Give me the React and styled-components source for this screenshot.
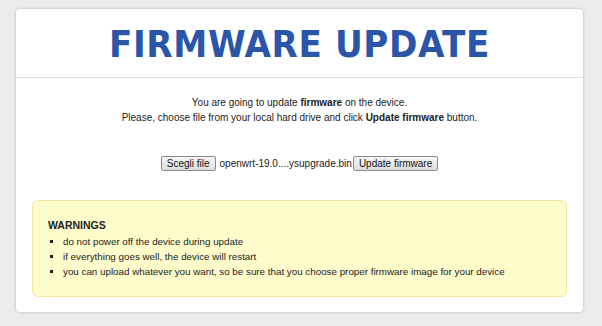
import React from "react";
import styled, { createGlobalStyle } from "styled-components";

const GlobalStyle = createGlobalStyle`
  html, body {
    margin: 0;
    padding: 0;
    background: #ececec;
  }
  body {
    font-family: "Liberation Sans", Arial, sans-serif;
  }
`;

const Page = styled.div`
  padding: 9px 19px 14px 16px;
`;

const Card = styled.div`
  background: #fff;
  border-radius: 4px;
  box-shadow: 0 0 3px rgba(0, 0, 0, 0.25);
  height: 303px;
  box-sizing: border-box;
  display: flex;
  flex-direction: column;
`;

const Header = styled.div`
  height: 68px;
  display: flex;
  align-items: center;
  justify-content: center;
  border-bottom: 1px solid #dedede;
`;

const Title = styled.h1`
  margin: 0;
  padding-top: 2px;
  font-family: "DejaVu Sans Condensed", "DejaVu Sans", Verdana, sans-serif;
  font-stretch: condensed;
  font-weight: 700;
  font-size: 38px;
  color: #2b55a9;
  letter-spacing: 0.6px;
`;

const Body = styled.div`
  padding: 17px 16px 0 16px;
`;

const Intro = styled.p`
  margin: 0;
  text-align: center;
  font-size: 10px;
  line-height: 15px;
  color: #222;
`;

const UploadRow = styled.div`
  display: flex;
  justify-content: center;
  align-items: center;
  margin-top: 31px;
  font-size: 10px;
  color: #222;
`;

const FormButton = styled.button`
  font-family: "Liberation Sans", Arial, sans-serif;
  font-size: 10px;
  color: #111;
  background: linear-gradient(#f6f6f6, #dddddd);
  border: 1px solid #8a8a8a;
  border-radius: 2px;
  padding: 1px 5px;
  height: 15px;
  line-height: 11px;
`;

const FileName = styled.span`
  margin: 0 1px 0 4px;
`;

const Warning = styled.div`
  margin-top: 29px;
  background: #fffccb;
  border: 1px solid #f5e2a0;
  border-radius: 6px;
  padding: 18px 16px 16px 15px;
  height: 97px;
  box-sizing: border-box;
  color: #222;
`;

const WarnTitle = styled.div`
  font-size: 10.5px;
  font-weight: 700;
  margin-bottom: 3px;
`;

const List = styled.ul`
  margin: 0;
  padding-left: 15px;
  list-style: square;
  font-size: 9.8px;
  line-height: 15px;
`;

export default function App() {
  return (
    <>
      <GlobalStyle />
      <Page>
        <Card>
          <Header>
            <Title>FIRMWARE UPDATE</Title>
          </Header>
          <Body>
            <Intro>
              You are going to update <b>firmware</b> on the device.
              <br />
              Please, choose file from your local hard drive and click{" "}
              <b>Update firmware</b> button.
            </Intro>
            <UploadRow>
              <FormButton>Scegli file</FormButton>
              <FileName>openwrt-19.0....ysupgrade.bin</FileName>
              <FormButton>Update firmware</FormButton>
            </UploadRow>
            <Warning>
              <WarnTitle>WARNINGS</WarnTitle>
              <List>
                <li>do not power off the device during update</li>
                <li>if everything goes well, the device will restart</li>
                <li>
                  you can upload whatever you want, so be sure that you choose
                  proper firmware image for your device
                </li>
              </List>
            </Warning>
          </Body>
        </Card>
      </Page>
    </>
  );
}
